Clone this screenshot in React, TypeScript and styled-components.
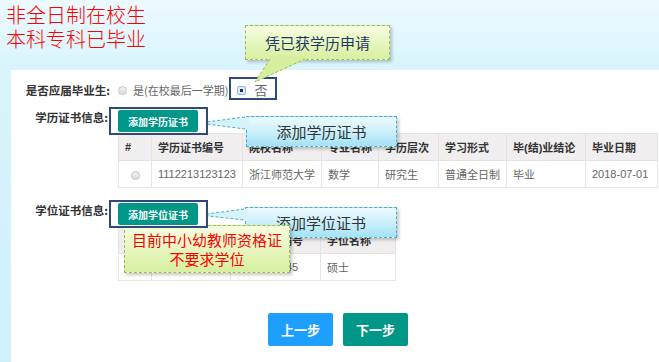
import React from 'react'
import styled, { createGlobalStyle } from 'styled-components'

const GlobalStyle = createGlobalStyle`
  html, body {
    margin: 0;
    padding: 0;
  }
  body {
    font-family: "Liberation Sans", "Noto Sans CJK SC", sans-serif;
  }
`

const degreeCols = [33, 91, 74, 54, 60, 65, 79, 72]
const degreeHead = ['#', '学历证书编号', '院校名称', '专业名称', '学历层次', '学习形式', '毕(结)业结论', '毕业日期']
const degreeRow = ['1112213123123', '浙江师范大学', '数学', '研究生', '普通全日制', '毕业', '2018-07-01']

const diplomaCols = [33, 78, 90, 75]
const diplomaHead = ['#', '学位授予单位', '学位证书编号', '学位名称']
const diplomaRow = ['浙江师范大学', '1033412345', '硕士']

export default function App() {
    return (
        <>
            <GlobalStyle />
            <Page>
                <Header>
                    <div>非全日制在校生</div>
                    <div>本科专科已毕业</div>
                </Header>
                <Panel>
                    <GradRow>
                        <Label $w={99}>是否应届毕业生:</Label>
                        <Option>
                            <Radio />
                            <OptionText>是(在校最后一学期)</OptionText>
                        </Option>
                        <MarkFrame>
                            <Radio $checked />
                            <OptionText>否</OptionText>
                        </MarkFrame>
                    </GradRow>

                    <CertRow $top={7}>
                        <Label $w={97}>学历证书信息:</Label>
                        <CertBlock>
                            <ButtonFrame>
                                <AddButton>添加学历证书</AddButton>
                            </ButtonFrame>
                            <CertTable cols={degreeCols} head={degreeHead} row={degreeRow} />
                        </CertBlock>
                    </CertRow>

                    <CertRow $top={12}>
                        <Label $w={97}>学位证书信息:</Label>
                        <CertBlock>
                            <ButtonFrame>
                                <AddButton>添加学位证书</AddButton>
                            </ButtonFrame>
                            <CertTable cols={diplomaCols} head={diplomaHead} row={diplomaRow} />
                        </CertBlock>
                    </CertRow>

                    <StepBar>
                        <StepButton $tone="blue">上一步</StepButton>
                        <StepButton $tone="teal">下一步</StepButton>
                    </StepBar>
                </Panel>

                {/* callouts drawn over the form */}
                <Callout $x={245} $y={25} $w={145} $h={35} $tone="green">
                    <Tail>
                        <polygon points="25,31 60,31 60,35 10,57 25,35" fill="#d6ef9f" />
                        <polyline points="25,34 10,57 60,34" fill="none" stroke="#9bbb59" strokeDasharray="3 2" />
                    </Tail>
                    <CalloutText $color="#1f3864">凭已获学历申请</CalloutText>
                </Callout>

                <Callout $x={246} $y={116} $w={151} $h={31} $tone="blue">
                    <Tail>
                        <polygon points="-47,7 -1,1 3,1 3,13 -1,13" fill="#d6f3fc" />
                        <polyline points="-1,1 -47,7 -1,13" fill="none" stroke="#4bacc6" strokeDasharray="3 2" />
                    </Tail>
                    <CalloutText $color="#333">添加学历证书</CalloutText>
                </Callout>

                <Callout $x={245} $y={207} $w={152} $h={31} $tone="blue">
                    <Tail>
                        <polygon points="-45,8 -1,2 3,2 3,13 -1,13" fill="#d6f3fc" />
                        <polyline points="-1,2 -45,8 -1,13" fill="none" stroke="#4bacc6" strokeDasharray="3 2" />
                    </Tail>
                    <CalloutText $color="#333">添加学位证书</CalloutText>
                </Callout>

                <Callout $x={124} $y={225} $w={166} $h={48} $tone="green">
                    <NoteText>
                        <div>目前中小幼教师资格证</div>
                        <div>不要求学位</div>
                    </NoteText>
                </Callout>
            </Page>
        </>
    )
}

function CertTable({ cols, head, row }: { cols: number[]; head: string[]; row: string[] }) {
    return (
        <Table>
            <colgroup>
                {cols.map((w, i) => <col key={i} style={{ width: w }} />)}
            </colgroup>
            <thead>
                <tr>
                    {head.map(h => <Th key={h}>{h}</Th>)}
                </tr>
            </thead>
            <tbody>
                <tr>
                    <Td $center><Radio /></Td>
                    {row.map((c, i) => <Td key={i}>{c}</Td>)}
                </tr>
            </tbody>
        </Table>
    )
}

const Page = styled.div`
    position: relative;
    width: 659px;
    height: 362px;
    overflow: hidden;
    display: flex;
    flex-direction: column;
    background: linear-gradient(180deg, #ecfafe 0%, #d9f4fc 18%, #cdf0fb 100%);
`

const Header = styled.div`
    height: 70px;
    box-sizing: border-box;
    padding: 3px 0 0 6px;
    font-family: "Noto Sans CJK SC", sans-serif;
    font-weight: 300;
    font-size: 20px;
    line-height: 24px;
    color: #ff0000;
`

const Panel = styled.div`
    flex: 1;
    margin-left: 11px;
    padding-top: 7px;
    background: #fff;
    display: flex;
    flex-direction: column;
`

const GradRow = styled.div`
    display: flex;
    align-items: center;
    height: 23px;
`

const Label = styled.div<{ $w: number }>`
    width: ${p => p.$w}px;
    flex-shrink: 0;
    text-align: right;
    font-family: "Noto Sans CJK SC", sans-serif;
    font-weight: 700;
    font-size: 11.5px;
    line-height: 20px;
    color: #333;
    padding-top: 2px;
`

const Option = styled.div`
    display: flex;
    align-items: center;
    margin-left: 8px;
    padding-top: 3px;
`

const OptionText = styled.span`
    margin-left: 6px;
    font-family: "Noto Sans CJK SC", sans-serif;
    font-size: 11px;
    line-height: 16px;
    color: #666;
`

const MarkFrame = styled.div`
    display: flex;
    align-items: center;
    box-sizing: border-box;
    height: 23px;
    margin-left: 1px;
    padding: 3px 8px 0 6px;
    border: 2px solid #2e4a7c;

    ${OptionText} {
        margin-left: 8px;
        font-size: 13px;
    }
`

const Radio = styled.span<{ $checked?: boolean }>`
    display: inline-block;
    position: relative;
    box-sizing: border-box;
    width: 9px;
    height: 9px;
    border-radius: ${p => (p.$checked ? '2px' : '50%')};
    border: 1px solid ${p => (p.$checked ? '#8fb8e8' : '#c4c4c4')};
    background: ${p => (p.$checked ? '#dce9fa' : 'linear-gradient(#f2f2f2, #dcdcdc)')};

    &::after {
        content: '';
        display: ${p => (p.$checked ? 'block' : 'none')};
        position: absolute;
        left: 2px;
        top: 2px;
        width: 3px;
        height: 3px;
        background: #333;
    }
`

const CertRow = styled.div<{ $top: number }>`
    display: flex;
    align-items: flex-start;
    margin-top: ${p => p.$top}px;

    ${Label} {
        padding-top: 0;
    }
`

const CertBlock = styled.div`
    display: flex;
    flex-direction: column;
    align-items: flex-start;
    margin-left: 1px;
`

const ButtonFrame = styled.div`
    position: relative;
    z-index: 1;
    background: #fff;
    border: 2px solid #2d4a7a;
    padding: 1px 8px 1px 7px;
    margin-bottom: -2px;
`

const AddButton = styled.div`
    width: 80px;
    height: 22px;
    display: flex;
    align-items: center;
    justify-content: center;
    border-radius: 2px;
    background: #009688;
    color: #fff;
    font-family: "Noto Sans CJK SC", sans-serif;
    font-weight: 700;
    font-size: 10px;
`

const Table = styled.table`
    margin-left: 9px;
    border-collapse: collapse;
    table-layout: fixed;
    font-size: 11px;
`

const Th = styled.th`
    height: 26px;
    padding: 0 6px;
    text-align: left;
    white-space: nowrap;
    overflow: hidden;
    background: #f0eeef;
    border: 1px solid #e4e2e3;
    font-family: "Liberation Sans", "Noto Sans CJK SC", sans-serif;
    font-weight: 700;
    color: #333;
`

const Td = styled.td<{ $center?: boolean }>`
    height: 26px;
    padding: 0 6px;
    text-align: ${p => (p.$center ? 'center' : 'left')};
    white-space: nowrap;
    overflow: hidden;
    border: 1px solid #e6e6e6;
    color: #666;
    font-family: "Liberation Sans", "Noto Sans CJK SC", sans-serif;

    ${Radio} {
        vertical-align: middle;
    }
`

const StepBar = styled.div`
    display: flex;
    justify-content: center;
    gap: 10px;
    margin-top: 32px;
    padding-left: 6px;
`

const StepButton = styled.div<{ $tone: 'blue' | 'teal' }>`
    width: 65px;
    height: 33px;
    display: flex;
    align-items: center;
    justify-content: center;
    border-radius: 2px;
    background: ${p => (p.$tone === 'blue' ? '#1e9fff' : '#009688')};
    color: #fff;
    font-family: "Noto Sans CJK SC", sans-serif;
    font-weight: 700;
    font-size: 13px;
`

const Callout = styled.div<{ $x: number; $y: number; $w: number; $h: number; $tone: 'green' | 'blue' }>`
    position: absolute;
    left: ${p => p.$x}px;
    top: ${p => p.$y}px;
    width: ${p => p.$w}px;
    height: ${p => p.$h}px;
    box-sizing: border-box;
    border: 1px dashed ${p => (p.$tone === 'green' ? '#9bbb59' : '#4bacc6')};
    background: ${p =>
        p.$tone === 'green'
            ? 'linear-gradient(180deg, #f6fcdf 0%, #e6f6bd 55%, #d6ef9f 100%)'
            : 'linear-gradient(180deg, #ecfafe 0%, #c9eefa 55%, #a3e2f6 100%)'};
    box-shadow: 2px 2px 3px rgba(0, 0, 0, 0.22);
    display: flex;
    align-items: center;
    justify-content: center;
`

const Tail = styled.svg`
    position: absolute;
    left: -1px;
    top: -1px;
    width: 1px;
    height: 1px;
    overflow: visible;
`

const CalloutText = styled.div<{ $color: string }>`
    position: relative;
    font-family: "Noto Sans CJK SC", sans-serif;
    font-size: 15px;
    line-height: 20px;
    color: ${p => p.$color};
`

const NoteText = styled.div`
    text-align: center;
    font-family: "Noto Sans CJK SC", sans-serif;
    font-size: 15px;
    line-height: 19px;
    color: #ff0000;
`
